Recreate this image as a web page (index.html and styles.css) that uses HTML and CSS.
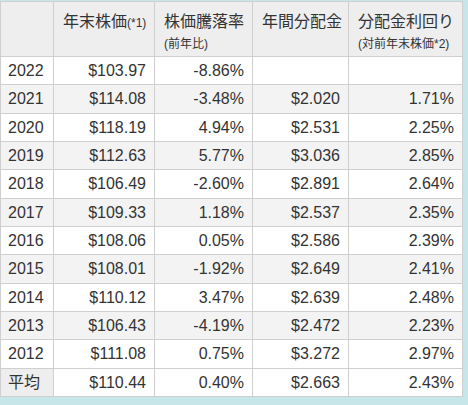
FILE: index.html
```html
<!DOCTYPE html>
<html lang="ja">
<head>
<meta charset="utf-8">
<title>株価と分配金</title>
<link rel="stylesheet" href="styles.css">
</head>
<body>
<table class="data">
  <thead>
    <tr>
      <th class="c1"></th>
      <th class="c2"><span class="main">年末株価<small>(*1)</small></span></th>
      <th class="c3"><span class="main">株価騰落率</span><span class="sub">(前年比)</span></th>
      <th class="c4"><span class="main">年間分配金</span></th>
      <th class="c5"><span class="main">分配金利回り</span><span class="sub">(対前年末株価*2)</span></th>
    </tr>
  </thead>
  <tbody>
    <tr><td class="year">2022</td><td>$103.97</td><td>-8.86%</td><td></td><td></td></tr>
    <tr><td class="year">2021</td><td>$114.08</td><td>-3.48%</td><td>$2.020</td><td>1.71%</td></tr>
    <tr><td class="year">2020</td><td>$118.19</td><td>4.94%</td><td>$2.531</td><td>2.25%</td></tr>
    <tr><td class="year">2019</td><td>$112.63</td><td>5.77%</td><td>$3.036</td><td>2.85%</td></tr>
    <tr><td class="year">2018</td><td>$106.49</td><td>-2.60%</td><td>$2.891</td><td>2.64%</td></tr>
    <tr><td class="year">2017</td><td>$109.33</td><td>1.18%</td><td>$2.537</td><td>2.35%</td></tr>
    <tr><td class="year">2016</td><td>$108.06</td><td>0.05%</td><td>$2.586</td><td>2.39%</td></tr>
    <tr><td class="year">2015</td><td>$108.01</td><td>-1.92%</td><td>$2.649</td><td>2.41%</td></tr>
    <tr><td class="year">2014</td><td>$110.12</td><td>3.47%</td><td>$2.639</td><td>2.48%</td></tr>
    <tr><td class="year">2013</td><td>$106.43</td><td>-4.19%</td><td>$2.472</td><td>2.23%</td></tr>
    <tr><td class="year">2012</td><td>$111.08</td><td>0.75%</td><td>$3.272</td><td>2.97%</td></tr>
    <tr class="avg"><th class="year">平均</th><td>$110.44</td><td>0.40%</td><td>$2.663</td><td>2.43%</td></tr>
  </tbody>
</table>
</body>
</html>
```

FILE: styles.css
```css
html, body {
  margin: 0;
  padding: 0;
  background: #c6e6ea;
}

body {
  padding-top: 1px;
  font-family: "Liberation Sans", "Noto Sans CJK JP", sans-serif;
  color: #333;
}

.data {
  border-collapse: separate;
  border-spacing: 0;
  table-layout: fixed;
  width: 463px;
  border-top: 1px solid #cfcfcf;
  border-left: 1px solid #cfcfcf;
  background: #fff;
  font-size: 16px;
}

.data th,
.data td {
  box-sizing: border-box;
  border-right: 1px solid #cfcfcf;
  border-bottom: 1px solid #cfcfcf;
  padding: 0;
}

.data thead th {
  background: #eeeeee;
  font-weight: normal;
  text-align: left;
  vertical-align: top;
  padding: 7px 6px 3px 9px;
  white-space: nowrap;
}

.c1 { width: 53px; }
.c2 { width: 101px; }
.c3 { width: 98px; }
.c4 { width: 96px; }
.c5 { width: 114px; }

.main {
  display: block;
  line-height: 26px;
  font-size: 16px;
}

.main small {
  font-size: 12px;
}

.sub {
  display: block;
  line-height: 18px;
  font-size: 12px;
}

.data tbody td,
.data tbody th {
  height: 28.33px;
  line-height: 27.33px;
  text-align: right;
  padding-right: 8px;
  white-space: nowrap;
}

.data tbody .year {
  text-align: left;
  padding-left: 7px;
  padding-right: 0;
  font-weight: normal;
}

.data tbody tr:nth-child(even) td {
  background: #f3f3f3;
}

.data tbody tr.avg td {
  background: #fff;
}

.data tbody tr.avg th {
  background: #eeeeee;
}
```
